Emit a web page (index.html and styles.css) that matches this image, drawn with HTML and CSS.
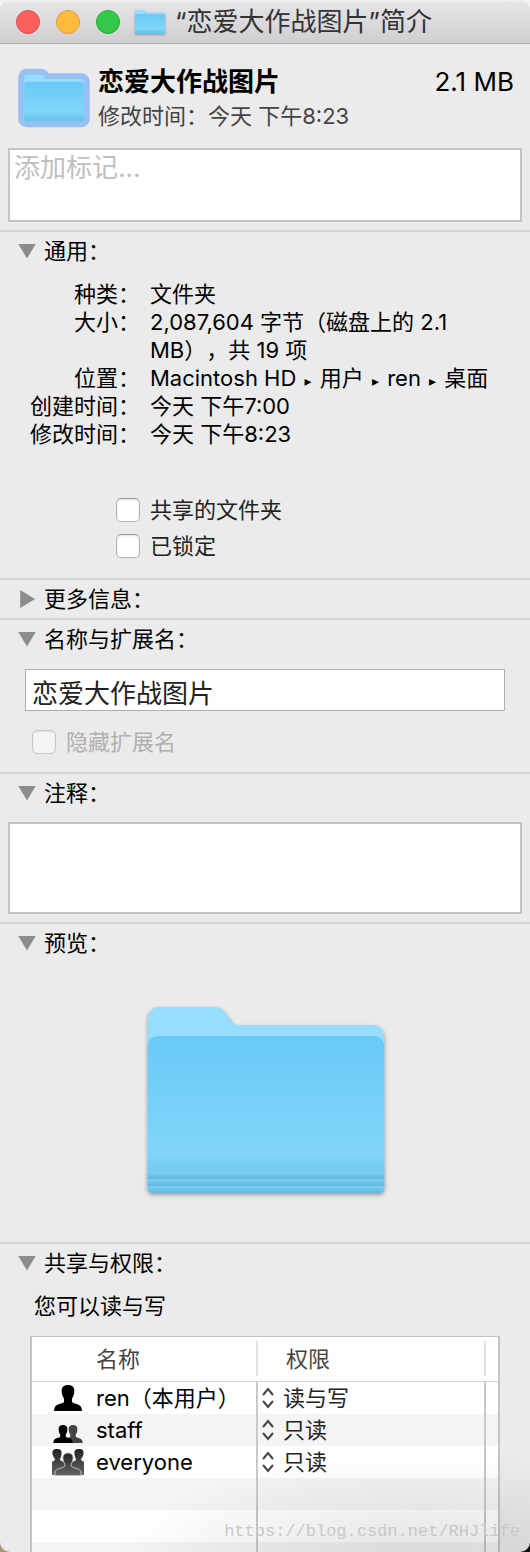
FILE: index.html
```html
<!DOCTYPE html>
<html lang="zh-CN">
<head>
<meta charset="utf-8">
<meta name="viewport" content="width=device-width, initial-scale=1">
<title>“恋爱大作战图片”简介</title>
<link rel="stylesheet" href="styles.css">
</head>
<body>
<svg class="defs" aria-hidden="true">
  <defs>
    <linearGradient id="front" x1="0" y1="0" x2="0" y2="1">
      <stop offset="0" stop-color="#69caf6"/>
      <stop offset=".74" stop-color="#80d5fa"/>
      <stop offset=".87" stop-color="#72cbf2"/>
      <stop offset="1" stop-color="#72cbf2"/>
    </linearGradient>
    <linearGradient id="fold" x1="0" y1="0" x2="0" y2="1">
      <stop offset="0" stop-color="#80cff2"/>
      <stop offset="1" stop-color="#5cb8e4"/>
    </linearGradient>
    <linearGradient id="crowd" x1="0" y1="0" x2="0" y2="1">
      <stop offset="0" stop-color="#222"/>
      <stop offset="1" stop-color="#666"/>
    </linearGradient>
    <symbol id="folder" viewBox="0 0 237 186">
      <path d="M0 13C0 5 5 0 12 0H67C73 0 76 3 79 7L84 14C86 17 88 18 92 18H225C232 18 237 23 237 31V180Q237 186 230 186H7Q0 186 0 180Z" fill="#97ddff"/>
      <path d="M0 40Q1 29 12 29H225Q236 29 237 40V180Q237 186 230 186H7Q0 186 0 180Z" fill="url(#front)"/>
      <path d="M0 165H237V172H0Z" fill="url(#fold)"/>
      <path d="M0 172H237V179H0Z" fill="url(#fold)"/>
      <path d="M0 179H237V180Q237 186 230 186H7Q0 186 0 180Z" fill="url(#fold)"/>
    </symbol>
    <symbol id="chevrons" viewBox="0 0 14 22">
      <path d="M2 8L7 2L12 8M2 14L7 20L12 14" fill="none" stroke="#444" stroke-width="2"/>
    </symbol>
    <symbol id="bust" viewBox="0 0 28 26">
      <path d="M14 0C18 0 20.500 2 20.300 6C20.200 9 19.500 12 18 13.500V17C19 18.500 26 19 27 22Q28 24 28 26H0Q0 24 1 22C2 19 9 18.500 10 17V13.500C8.500 12 7.800 9 7.700 6C7.500 2 10 0 14 0Z"/>
    </symbol>
  </defs>
</svg>
<main class="window">
  <header class="titlebar">
    <div class="lights">
      <button class="light close" aria-label="关闭"></button>
      <button class="light minimize" aria-label="最小化"></button>
      <button class="light zoom" aria-label="缩放"></button>
    </div>
    <svg class="title-folder" aria-hidden="true"><use href="#folder"/></svg>
    <h1 class="title">“恋爱大作战图片”简介</h1>
  </header>

  <section class="overview">
    <svg class="halo-folder" viewBox="-24 -24 285 234" aria-hidden="true">
      <path d="M10 10H67L84 28H227V176H10Z" fill="#98c0f2" stroke="#98c0f2" stroke-width="66" stroke-linejoin="round"/>
      <use href="#folder" width="237" height="186"/>
    </svg>
    <div class="overview-text">
      <div class="overview-line">
        <strong class="name">恋爱大作战图片</strong>
        <span class="size">2.1 MB</span>
      </div>
      <p class="modified">修改时间：今天 下午8:23</p>
    </div>
  </section>
  <textarea class="box tags" aria-label="标记" placeholder="添加标记..."></textarea>

  <details class="section" open>
    <summary class="head">通用：</summary>
    <dl class="facts">
      <dt>种类：</dt><dd>文件夹</dd>
      <dt>大小：</dt><dd>2,087,604 字节（磁盘上的 2.1 MB），共 19 项</dd>
      <dt>位置：</dt><dd>Macintosh HD <span class="arrow">▸</span> 用户 <span class="arrow">▸</span> ren <span class="arrow">▸</span> 桌面</dd>
      <dt>创建时间：</dt><dd>今天 下午7:00</dd>
      <dt>修改时间：</dt><dd>今天 下午8:23</dd>
    </dl>
    <div class="options">
      <label class="option"><input class="check" type="checkbox">共享的文件夹</label>
      <label class="option"><input class="check" type="checkbox">已锁定</label>
    </div>
  </details>

  <details class="section">
    <summary class="head">更多信息：</summary>
  </details>

  <details class="section" open>
    <summary class="head">名称与扩展名：</summary>
    <div class="naming">
      <input class="filename" type="text" aria-label="名称与扩展名" value="恋爱大作战图片">
      <label class="option disabled"><input class="check" type="checkbox" disabled>隐藏扩展名</label>
    </div>
  </details>

  <details class="section" open>
    <summary class="head">注释：</summary>
    <textarea class="box comments" aria-label="注释"></textarea>
  </details>

  <details class="section" open>
    <summary class="head">预览：</summary>
    <div class="preview">
      <svg class="preview-folder" viewBox="0 0 237 186" role="img" aria-label="文件夹"><use href="#folder"/></svg>
    </div>
  </details>

  <details class="section" open>
    <summary class="head">共享与权限：</summary>
    <p class="access">您可以读与写</p>
    <div class="table-wrap">
      <table class="permissions">
        <colgroup><col class="col-name"><col><col class="col-end"></colgroup>
        <thead>
          <tr><th scope="col">名称</th><th class="privilege" scope="col">权限</th><th></th></tr>
        </thead>
        <tbody>
          <tr>
            <td><div class="user"><svg class="user-icon" viewBox="0 0 32 28" aria-hidden="true"><use href="#bust" x="2" y="1" width="28" height="26"/></svg>ren（本用户）</div></td>
            <td><div class="access-cell"><svg class="chevrons" aria-hidden="true"><use href="#chevrons"/></svg><select class="level" aria-label="ren 的权限"><option>读与写</option><option>只读</option></select></div></td>
            <td></td>
          </tr>
          <tr>
            <td><div class="user"><svg class="user-icon" viewBox="0 0 32 28" aria-hidden="true"><use href="#bust" x="11" y="9" width="20" height="18" fill="#444"/><use href="#bust" x="1" y="9" width="20" height="18"/></svg>staff</div></td>
            <td><div class="access-cell"><svg class="chevrons" aria-hidden="true"><use href="#chevrons"/></svg><select class="level" aria-label="staff 的权限"><option>只读</option><option>读与写</option></select></div></td>
            <td></td>
          </tr>
          <tr>
            <td><div class="user"><svg class="user-icon" viewBox="0 0 32 28" aria-hidden="true"><g fill="url(#crowd)"><path d="M5 1C9 1 10 3 9.500 6C9.500 9 8 10 8 12L13 15V27H0V14L3 12C3 10 1 9 .5 6C0 3 1 1 5 1Z"/><path d="M27 1C23 1 22 3 22.500 6C22.500 9 24 10 24 12L19 15V27H32V14L29 12C29 10 31 9 31.500 6C32 3 31 1 27 1Z"/><path d="M16 5C20 5 21.500 8 21 11C21 14 19 15 19 18C20 20 28 20 29 24V27.500H3V24C4 20 12 20 13 18C13 15 11 14 11 11C10.500 8 12 5 16 5Z" stroke="#bbb" stroke-width="1"/></g></svg>everyone</div></td>
            <td><div class="access-cell"><svg class="chevrons" aria-hidden="true"><use href="#chevrons"/></svg><select class="level" aria-label="everyone 的权限"><option>只读</option><option>读与写</option></select></div></td>
            <td></td>
          </tr>
          <tr><td></td><td></td><td></td></tr>
          <tr><td></td><td></td><td></td></tr>
          <tr class="cut"><td></td><td></td><td></td></tr>
        </tbody>
      </table>
    </div>
  </details>
  <div class="shade"></div>
  <p class="watermark">https://blog.csdn.net/RHJlife</p>
</main>
</body>
</html>
```

FILE: styles.css
```css
* {
  box-sizing: border-box;
}

body {
  margin: 0;
  background: linear-gradient(#f4f4f4 50%, transparent 50%), linear-gradient(90deg, #a89478 50%, #111 50%);
  color: #000;
  font-family: Inter, "Noto Sans CJK SC", sans-serif;
  font-size: 22px;
  line-height: 28px;
  text-spacing-trim: space-all;
}

p,
h1,
dl,
dd {
  margin: 0;
}

button,
input,
select,
textarea {
  font: inherit;
}

.defs {
  position: absolute;
  width: 0;
  height: 0;
}

.window {
  position: relative;
  min-height: 100vh;
  overflow: hidden;
  border-radius: 10px;
  background: #ebebeb;
}

.titlebar {
  display: flex;
  align-items: center;
  height: 44px;
  padding: 0 16px;
  border-bottom: 1px solid #b0aeb0;
  background: linear-gradient(#f3f1f3, #e6e4e7 3px, #d1ced2);
}

.lights {
  display: flex;
  gap: 16px;
}

.light {
  width: 24px;
  height: 24px;
  padding: 0;
  border: 1px solid;
  border-radius: 50%;
}

.close {
  border-color: #df4a46;
  background: #fc605c;
}

.minimize {
  border-color: #dd9e33;
  background: #fdbc40;
}

.zoom {
  border-color: #27aa35;
  background: #34c84a;
}

.title-folder {
  width: 30px;
  height: 24px;
  margin: 0 10px 0 15px;
  filter: drop-shadow(0 1px 1px rgba(0, 0, 0, 0.3));
}

.title {
  color: #333;
  font-size: 26px;
  font-weight: 400;
  line-height: 36px;
  white-space: nowrap;
}

.overview {
  display: flex;
  align-items: center;
  gap: 8px;
  padding: 20px 16px 16px 18px;
}

.halo-folder {
  flex: none;
  width: 72px;
  height: 60px;
}

.overview-text {
  flex: 1;
}

.overview-line {
  display: flex;
  justify-content: space-between;
  font-size: 26px;
  line-height: 36px;
}

.name {
  font-weight: 700;
}

.modified {
  color: #444;
  line-height: 32px;
}

.box {
  display: block;
  width: calc(100% - 16px);
  margin: 0 8px 8px;
  border: 2px solid #c4c4c4;
  background: #fff;
  resize: none;
  outline: 0;
}

.tags {
  height: 74px;
  padding: 0 4px;
  font-size: 26px;
  line-height: 36px;
}

.tags::placeholder {
  color: #bfbfbf;
}

.section {
  border-top: 2px solid #d5d5d5;
}

.head {
  display: flex;
  align-items: center;
  gap: 8px;
  height: 38px;
  padding-left: 18px;
}

.head::before {
  width: 18px;
  height: 15px;
  background: #8c8c8c;
  clip-path: polygon(0 0, 100% 0, 50% 100%);
  content: "";
}

.section:not([open]) .head::before {
  height: 18px;
  clip-path: polygon(12% 0, 95% 50%, 12% 100%);
}

.facts {
  display: grid;
  grid-template-columns: 122px 1fr;
  column-gap: 10px;
  padding: 10px 24px 0 18px;
}

.facts dt {
  text-align: right;
}

.arrow {
  margin: 0 2px;
  font-family: "DejaVu Sans", sans-serif;
  font-size: 14px;
  line-height: 1;
}

.options {
  display: grid;
  gap: 8px;
  padding: 48px 16px 18px 116px;
}

.option {
  display: flex;
  align-items: center;
  gap: 10px;
  color: #222;
}

.disabled {
  color: #b0b0b0;
}

.check {
  width: 24px;
  height: 24px;
  margin: 0;
  border: 1px solid #b4b4b4;
  border-top-color: #999;
  border-radius: 5px;
  background: #fff;
  appearance: none;
  box-shadow: inset 0 1px 2px #ddd;
}

.check:disabled {
  border-color: #c8c8c8;
  background: #f5f5f5;
}

.naming {
  display: grid;
  gap: 17px;
  padding: 11px 25px 16px;
}

.naming .option {
  padding-left: 7px;
}

.filename {
  width: 100%;
  height: 42px;
  padding: 2px 6px 0;
  border: 1px solid #b0b0b0;
  background: #fff;
  color: #222;
  font-size: 26px;
  outline: 0;
}

.comments {
  height: 92px;
  margin-top: 10px;
}

.preview {
  display: flex;
  justify-content: center;
  padding: 45px 0 49px 2px;
}

.preview-folder {
  width: 238px;
  height: 186px;
  filter: drop-shadow(0 2px 2px rgba(0, 0, 0, 0.35));
  overflow: visible;
}

.access {
  padding: 10px 34px 16px;
}

.table-wrap {
  margin: 0 30px;
  border: 2px solid #c4c4c4;
  border-top-width: 1px;
  border-bottom: 0;
}

.permissions {
  width: 100%;
  border-collapse: separate;
  border-spacing: 0;
  table-layout: fixed;
  background: #fff;
}

.col-name {
  width: 226px;
}

.col-end {
  width: 12px;
}

.permissions th {
  height: 45px;
  padding: 0 0 0 64px;
  border-bottom: 1px solid #d5d5d5;
  background: linear-gradient(#e2e2e2, #e2e2e2) right 4px / 2px 35px no-repeat;
  color: #444;
  font-weight: 400;
  text-align: left;
}

.permissions .privilege {
  padding-left: 28px;
}

.permissions th:last-child,
.permissions td:last-child {
  padding: 0;
  border-right: 0;
  background: none;
}

.permissions td {
  height: 32px;
  padding: 0;
  border-right: 2px solid #c8c8c8;
}

.permissions tbody tr:nth-child(even) {
  background: #f4f4f4;
}

.permissions .cut td {
  height: 10px;
}

.user {
  display: flex;
  align-items: center;
  gap: 12px;
  padding-left: 20px;
  white-space: nowrap;
}

.user-icon {
  width: 32px;
  height: 28px;
}

.access-cell {
  display: flex;
  align-items: center;
  gap: 8px;
  padding-left: 3px;
}

.chevrons {
  width: 14px;
  height: 22px;
}

.level {
  flex: 1;
  min-width: 0;
  padding: 0;
  border: 0;
  background: transparent;
  color: #222;
  appearance: none;
}

.shade {
  position: absolute;
  right: 0;
  bottom: 0;
  width: 80%;
  height: 100px;
  background: radial-gradient(ellipse at 75% 115%, rgba(0, 0, 0, 0.12), transparent 70%);
  pointer-events: none;
}

.watermark {
  position: absolute;
  right: 10px;
  bottom: 6px;
  color: #c9c9c4;
  font-family: "Liberation Mono", monospace;
  font-size: 17px;
}
```
